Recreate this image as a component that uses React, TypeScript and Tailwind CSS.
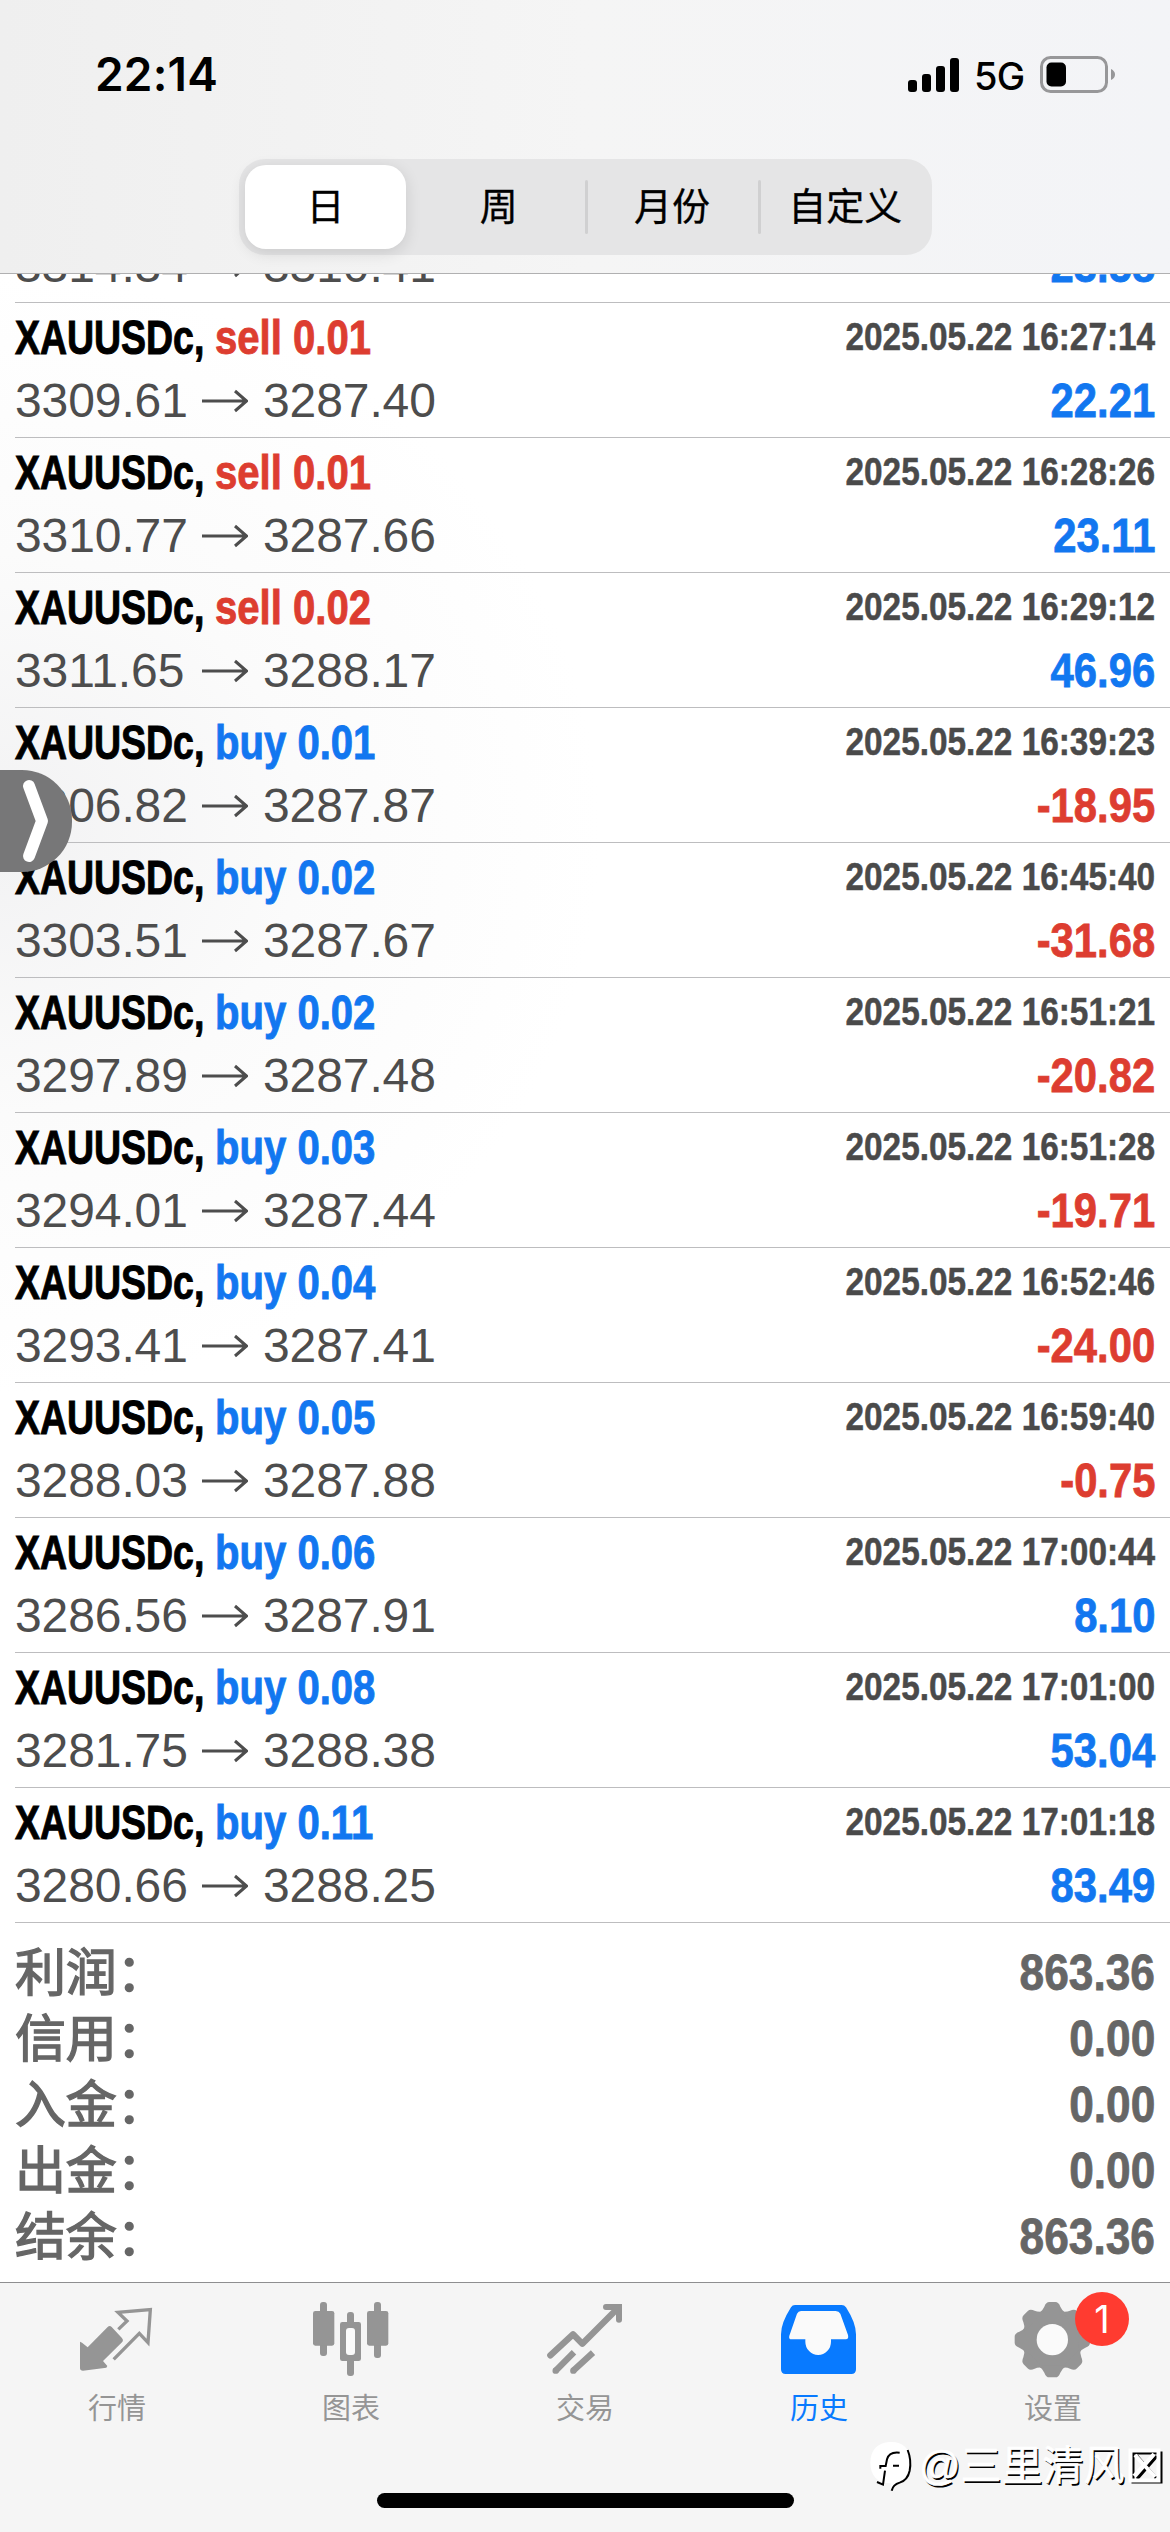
import type { ReactNode } from "react";
import clsx from "clsx";

type Side = "buy" | "sell";

interface Deal {
  side: Side;
  lots: string;
  open: string;
  close: string;
  time: string;
  profit: string;
}

const symbol = "XAUUSDc,";

const deals: Deal[] = [
  { side: "sell", lots: "0.06", open: "3314.34", close: "3310.41", time: "2025.05.22 16:24:51", profit: "23.58" },
  { side: "sell", lots: "0.01", open: "3309.61", close: "3287.40", time: "2025.05.22 16:27:14", profit: "22.21" },
  { side: "sell", lots: "0.01", open: "3310.77", close: "3287.66", time: "2025.05.22 16:28:26", profit: "23.11" },
  { side: "sell", lots: "0.02", open: "3311.65", close: "3288.17", time: "2025.05.22 16:29:12", profit: "46.96" },
  { side: "buy",  lots: "0.01", open: "3306.82", close: "3287.87", time: "2025.05.22 16:39:23", profit: "-18.95" },
  { side: "buy",  lots: "0.02", open: "3303.51", close: "3287.67", time: "2025.05.22 16:45:40", profit: "-31.68" },
  { side: "buy",  lots: "0.02", open: "3297.89", close: "3287.48", time: "2025.05.22 16:51:21", profit: "-20.82" },
  { side: "buy",  lots: "0.03", open: "3294.01", close: "3287.44", time: "2025.05.22 16:51:28", profit: "-19.71" },
  { side: "buy",  lots: "0.04", open: "3293.41", close: "3287.41", time: "2025.05.22 16:52:46", profit: "-24.00" },
  { side: "buy",  lots: "0.05", open: "3288.03", close: "3287.88", time: "2025.05.22 16:59:40", profit: "-0.75" },
  { side: "buy",  lots: "0.06", open: "3286.56", close: "3287.91", time: "2025.05.22 17:00:44", profit: "8.10" },
  { side: "buy",  lots: "0.08", open: "3281.75", close: "3288.38", time: "2025.05.22 17:01:00", profit: "53.04" },
  { side: "buy",  lots: "0.11", open: "3280.66", close: "3288.25", time: "2025.05.22 17:01:18", profit: "83.49" },
];

const totals = [
  { label: "利润：", value: "863.36" },
  { label: "信用：", value: "0.00" },
  { label: "入金：", value: "0.00" },
  { label: "出金：", value: "0.00" },
  { label: "结余：", value: "863.36" },
];

const periods = ["日", "周", "月份", "自定义"];

function StatusBar() {
  return (
    <div className="flex h-[159px] items-start justify-between pt-[46px] pr-[54px] pl-[95px]">
      <span className="font-['Inter'] text-[46px] leading-[56px] font-semibold tracking-[0.2px] text-black">22:14</span>
      <div className="flex h-[57px] items-center">
        <svg className="h-[34px] w-[51px]" viewBox="0 0 51 34">
          <rect x="0" y="22" width="9" height="12" rx="3" />
          <rect x="14" y="16" width="9" height="18" rx="3" />
          <rect x="28" y="8" width="9" height="26" rx="3" />
          <rect x="42" y="0" width="9" height="34" rx="3" />
        </svg>
        <span className="ml-[15px] w-[51px] pt-[2px] font-['Inter'] text-[38px] leading-[40px] font-medium tracking-[-0.8px] text-black">5G</span>
        <svg className="ml-[14px] h-[37px] w-[77px]" viewBox="0 0 77 37">
          <rect x="2.5" y="1.5" width="65" height="34" rx="9" fill="none" stroke="#979799" strokeWidth="3" />
          <rect x="7.5" y="6.5" width="19.5" height="24" rx="5" />
          <path d="M72 13 Q76 15 76 18.500 Q76 22 72 24Z" fill="#979799" />
        </svg>
      </div>
    </div>
  );
}

function PeriodSwitch() {
  return (
    <div className="ml-[239px] grid h-[96px] w-[693px] grid-cols-4 rounded-[26px] bg-[#e5e5e6]">
      {periods.map((period, i) => (
        <div key={period} className="relative flex items-center justify-center p-[6px]">
          <span
            className={clsx(
              "flex size-full items-center justify-center pt-[1px] text-[38px] whitespace-nowrap text-black [-webkit-text-stroke:0.3px]",
              i === 0 && "rounded-[21px] bg-white shadow-[0_4px_16px_rgba(0,0,0,0.12)]",
            )}
          >
            {period}
          </span>
          {i > 1 && <span className="absolute top-[21px] left-[-1px] h-[54px] w-[3px] rounded-full bg-[#d0d0d1]" />}
        </div>
      ))}
    </div>
  );
}

function DealRow({ deal }: { deal: Deal }) {
  const loss = deal.profit.startsWith("-");
  return (
    <li className="ml-[15px] h-[135px] shrink-0 border-b border-[#bdbdbf] pr-[15px] text-[48px] whitespace-nowrap">
      <div className="flex h-[70px] justify-between leading-[70px] font-bold">
        <div className="flex">
          <span className="w-[200px] origin-left scale-x-[0.78] text-black [-webkit-text-stroke:1px]">{symbol}</span>
          <span
            className={clsx(
              "origin-left scale-x-[0.835] [-webkit-text-stroke:0.9px]",
              deal.side === "sell" ? "text-[#dd3d30]" : "text-[#1277f0]",
            )}
          >
            {deal.side} {deal.lots}
          </span>
        </div>
        <span className="origin-right scale-x-[0.855] text-[39px] leading-[67px] text-[#4a4a4a] [-webkit-text-stroke:0.5px]">{deal.time}</span>
      </div>
      <div className="flex justify-between leading-[56px]">
        <div className="flex items-center text-[#4d4d4d]">
          <span className="w-[187px] tracking-[-0.1px]">{deal.open}</span>
          <svg className="h-[24px] w-[46px]" viewBox="0 0 46 24" fill="none" stroke="currentColor" strokeWidth="3">
            <path d="M0 12H44M33 2L44.500 12L33 22" />
          </svg>
          <span className="ml-[15px] tracking-[-0.1px]">{deal.close}</span>
        </div>
        <span
          className={clsx(
            "origin-right scale-x-[0.87] font-bold [-webkit-text-stroke:0.8px]",
            loss ? "text-[#dd3d30]" : "text-[#1277f0]",
          )}
        >
          {deal.profit}
        </span>
      </div>
    </li>
  );
}

function QuotesIcon() {
  return (
    <svg className="size-[80px]" viewBox="0 0 240 240">
      <path fill="currentColor" d="M9 128L15 131L32 145L92 84Q98 78 104 84L134 116Q141 123 135 130L78 186L91 201L88 206L18 215Q9 215 9 208Z" />
      <path fill="none" stroke="currentColor" strokeWidth="10" d="M124 91L150 66L123 40L220 32L213 131L187 103L110 181" />
    </svg>
  );
}

function ChartIcon() {
  return (
    <svg className="size-[80px]" viewBox="0 0 240 240" fill="currentColor">
      <rect x="27" y="9" width="21" height="162" rx="9" />
      <rect x="6" y="36" width="64" height="104" rx="7" />
      <rect x="108" y="39" width="21" height="192" rx="9" />
      <rect x="87" y="69" width="63" height="117" rx="7" />
      <rect x="105" y="87" width="27" height="81" rx="9" fill="#fafafa" />
      <rect x="189" y="9" width="21" height="168" rx="9" />
      <rect x="168" y="36" width="64" height="104" rx="7" />
    </svg>
  );
}

function TradeIcon() {
  return (
    <svg className="size-[80px]" viewBox="0 0 240 240" fill="none" stroke="currentColor" strokeWidth="19">
      <path strokeLinecap="round" strokeLinejoin="round" d="M16 169L84 106L112 134L219 27" />
      <path strokeLinecap="round" strokeWidth="18" d="M183 24H222V62" />
      <path d="M32 215L87 160M85 215L144 161" />
      <circle cx="32" cy="215" r="9.500" fill="currentColor" stroke="none" />
      <circle cx="85" cy="215" r="9.500" fill="currentColor" stroke="none" />
    </svg>
  );
}

function HistoryIcon() {
  return (
    <svg className="size-[80px]" viewBox="0 0 240 240">
      <path
        fill="currentColor"
        d="M48 18H188Q196 18 201 25Q231 72 231 106V211Q231 225 217 225H20Q6 225 6 211V106Q6 72 36 25Q40 18 48 18Z"
      />
      <path
        fill="#fafafa"
        d="M66 36H170Q180 36 184 44L207 108Q210 121 200 121H156V128A38.500 40 0 0 1 79 128V121H38Q28 121 31 110L54 44Q58 36 66 36Z"
      />
    </svg>
  );
}

const teeth = [0, 45, 90, 135, 180, 225, 270, 315];

function SettingsIcon() {
  return (
    <svg className="size-[80px]" viewBox="0 0 240 240" fill="currentColor">
      <g transform="translate(118 122)">
        <circle r="90" />
        {teeth.map((angle) => (
          <path key={angle} transform={`rotate(${angle})`} d="M-42 -78Q-28 -88 -24 -99Q-19 -113 -9 -113H9Q19 -113 24 -99Q28 -88 42 -78Z" />
        ))}
        <circle r="47" fill="#fafafa" />
      </g>
    </svg>
  );
}

interface Tab {
  label: string;
  icon: ReactNode;
  active?: boolean;
  badge?: number;
}

const tabs: Tab[] = [
  { label: "行情", icon: <QuotesIcon /> },
  { label: "图表", icon: <ChartIcon /> },
  { label: "交易", icon: <TradeIcon /> },
  { label: "历史", icon: <HistoryIcon />, active: true },
  { label: "设置", icon: <SettingsIcon />, badge: 1 },
];

function TabBar() {
  return (
    <nav className="relative flex h-[250px] flex-col items-center border-t border-[#8e8e90] bg-[#f5f5f5]">
      <div className="grid w-full grid-cols-5">
        {tabs.map(({ label, icon, active, badge }) => (
          <div key={label} className={clsx("relative flex flex-col items-center pt-[16px]", active ? "text-[#087aff]" : "text-[#959595]")}>
            {icon}
            <span className="mt-[8px] text-[29px] leading-[44px]">{label}</span>
            {badge && (
              <span className="absolute top-[9px] left-[139px] flex size-[54px] items-center justify-center rounded-full bg-[#ff3b30] font-['Inter'] text-[38px] text-white">
                {badge}
              </span>
            )}
          </div>
        ))}
      </div>
      <div className="mt-auto mb-[24px] h-[15px] w-[417px] rounded-full bg-black" />
      <Watermark />
    </nav>
  );
}

function Watermark() {
  return (
    <div className="absolute top-[157px] left-[869px] flex items-center">
      <svg className="h-[52px] w-[46px]" viewBox="0 0 138 156">
        <path fill="#fff" d="M62 6C100 4 122 22 124 66C126 108 112 122 92 128Q74 134 66 154Q62 140 66 130C24 130 4 106 4 68C4 30 26 8 62 6Z" />
        <path
          fill="none"
          stroke="#000"
          strokeWidth="6"
          d="M116 30Q128 60 122 92Q116 120 92 128Q72 134 68 152M92 38Q60 34 54 58L50 78H34V86M72 77H90M48 92L42 134L24 126"
        />
      </svg>
      <span className="ml-[4px] text-[41px] leading-[52px] whitespace-nowrap text-white [text-shadow:1.500px_1.500px_0_#000] [-webkit-text-stroke:0.6px_#fff]">@三里清风</span>
      <svg className="ml-[3px] h-[38px] w-[36px]" viewBox="0 0 36 38" fill="none">
        <path stroke="#000" strokeWidth="3" d="M5 6H33V35H5ZM9 9L28 31M29 9L9 32" />
        <path stroke="#fff" strokeWidth="4" d="M2.500 3.500H30.500V33.500H2.500ZM7 8L27 30M26 7L6 29" />
      </svg>
    </div>
  );
}

function SideHandle() {
  return (
    <div className="absolute top-[770px] left-0 flex h-[102px] w-[72px] items-center rounded-r-[50px] bg-[#777778]">
      <svg className="ml-[20px] h-[86px] w-[32px]" viewBox="0 0 32 86" fill="none">
        <path stroke="#fff" strokeWidth="12" strokeLinecap="round" strokeLinejoin="round" d="M9 8L22 43L9 78" />
      </svg>
    </div>
  );
}

export default function App() {
  return (
    <div className="relative flex h-[2532px] w-[1170px] flex-col overflow-hidden bg-white font-['Liberation_Sans','Noto_Sans_CJK_SC',sans-serif]">
      <header className="h-[274px] border-b border-[#b0b0b1] bg-linear-to-r from-[#efefef] via-[#f5f5f5] to-[#f3f4f7]">
        <StatusBar />
        <PeriodSwitch />
      </header>

      <main className="flex h-[2008px] flex-col bg-[radial-gradient(ellipse_600px_560px_at_0_560px,#f2f2f3,#fbfbfb_50%,#ffffff)]">
        {/* the list is scrolled to the end, so the oldest deal is cut by the header */}
        <ul className="flex h-[1649px] flex-col justify-end overflow-hidden">
          {deals.map((deal) => (
            <DealRow key={deal.time} deal={deal} />
          ))}
        </ul>
        <dl className="flex flex-col pt-[17px] pr-[15px] pl-[15px] text-[#666666]">
          {totals.map(({ label, value }) => (
            <div key={label} className="flex h-[66px] justify-between leading-[66px]">
              <dt className="pt-[1px] text-[51px] tracking-[-0.3px] [-webkit-text-stroke:1.4px]">{label}</dt>
              <dd className="origin-right scale-x-[0.885] text-[50px] font-bold [-webkit-text-stroke:0.8px]">{value}</dd>
            </div>
          ))}
        </dl>
      </main>

      <TabBar />
      <SideHandle />
    </div>
  );
}
